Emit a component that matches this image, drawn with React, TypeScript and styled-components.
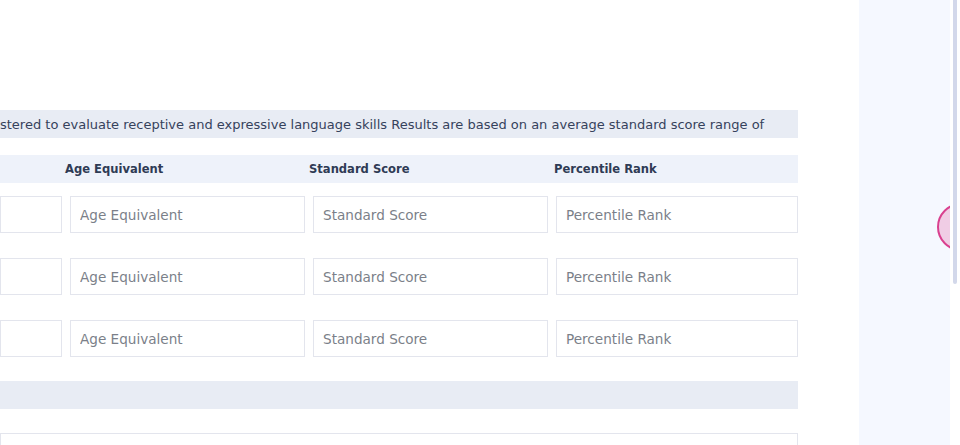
import React from "react";
import styled, { createGlobalStyle } from "styled-components";

const Global = createGlobalStyle`
  html, body { margin: 0; padding: 0; background: #ffffff; }
  body { font-family: "DejaVu Sans", "Open Sans", sans-serif; overflow: hidden; }
  #root { width: 960px; height: 445px; }
`;

const Page = styled.div`
  display: flex;
  width: 960px;
  height: 445px;
  overflow: hidden;
  background: #ffffff;
`;

const Main = styled.main`
  width: 859px;
  flex: none;
  padding-top: 110px;
  box-sizing: border-box;
  overflow: hidden;
`;

const Form = styled.div`
  width: 798px;
  display: flex;
  flex-direction: column;
`;

const Description = styled.div`
  height: 28px;
  background: #e8ecf4;
  display: flex;
  align-items: center;
  color: #36425c;
  font-size: 13px;
  white-space: nowrap;
  overflow: hidden;
  margin-bottom: 17px;
`;

const HeaderRow = styled.div`
  height: 28px;
  background: #eef2fa;
  display: grid;
  grid-template-columns: 65px 244px 245px 1fr;
  align-items: center;
  margin-bottom: 13px;
`;

const HeaderCell = styled.div`
  color: #2f3b55;
  font-size: 11.55px;
  font-weight: 700;
  white-space: nowrap;
`;

const Rows = styled.div`
  display: flex;
  flex-direction: column;
  gap: 25px;
`;

const InputRow = styled.div`
  display: grid;
  grid-template-columns: 62px 235px 235px 242px;
  column-gap: 8px;
`;

const Field = styled.input`
  height: 37px;
  box-sizing: border-box;
  border: 1px solid #e3e5ed;
  border-radius: 0;
  padding: 0 9px;
  font-family: "DejaVu Sans", "Open Sans", sans-serif;
  font-size: 13.6px;
  color: #333;
  background: #ffffff;
  outline: none;
  min-width: 0;
  &::placeholder { color: #7b7f89; }
`;

const SectionBar = styled.div`
  height: 28px;
  background: #e8ecf4;
  margin-top: 24px;
  margin-bottom: 24px;
`;

const WideField = styled.div`
  height: 40px;
  border: 1px solid #e3e5ed;
  border-bottom: none;
`;

const SidePanel = styled.aside`
  position: relative;
  width: 91px;
  flex: none;
  background: #f5f8ff;
  overflow: hidden;
`;

const FloatButton = styled.div`
  position: absolute;
  left: 78px;
  top: 203px;
  width: 44px;
  height: 44px;
  border-radius: 50%;
  border: 2px solid #d9408f;
  background: #f0cde5;
`;

const ScrollTrack = styled.div`
  width: 10px;
  flex: none;
  padding-left: 3px;
  box-sizing: border-box;
`;

const ScrollThumb = styled.div`
  width: 4px;
  height: 284px;
  background: #d3d8ea;
  border-radius: 0 0 2px 2px;
`;

const rows = [0, 1, 2];

export default function App() {
  return (
    <>
      <Global />
      <Page>
        <Main>
          <Form>
            <Description>
              stered to evaluate receptive and expressive language skills Results are based on an average standard score range of
            </Description>
            <HeaderRow>
              <HeaderCell />
              <HeaderCell>Age Equivalent</HeaderCell>
              <HeaderCell>Standard Score</HeaderCell>
              <HeaderCell>Percentile Rank</HeaderCell>
            </HeaderRow>
            <Rows>
              {rows.map((r) => (
                <InputRow key={r}>
                  <Field />
                  <Field placeholder="Age Equivalent" />
                  <Field placeholder="Standard Score" />
                  <Field placeholder="Percentile Rank" />
                </InputRow>
              ))}
            </Rows>
            <SectionBar />
            <WideField />
          </Form>
        </Main>
        <SidePanel>
          <FloatButton />
        </SidePanel>
        <ScrollTrack>
          <ScrollThumb />
        </ScrollTrack>
      </Page>
    </>
  );
}
